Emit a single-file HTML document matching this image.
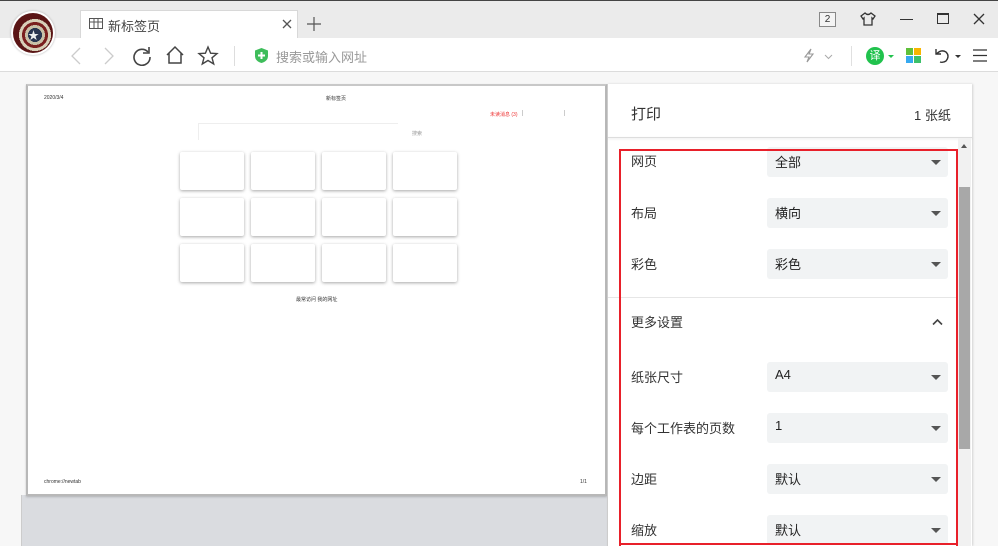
<!DOCTYPE html>
<html><head><meta charset="utf-8"><style>
*{margin:0;padding:0;box-sizing:border-box}
body{width:998px;height:546px;overflow:hidden;background:#f7f7f7;font-family:"Liberation Sans","Noto Sans CJK SC",sans-serif;position:relative;color:#333}
.a{position:absolute}
.tabbar{left:0;top:0;width:998px;height:38px;background:#ebebeb;border-top:1px solid #444}
.tool{left:0;top:38px;width:998px;height:34px;background:#fff;border-bottom:1px solid #dcdcdc}
.card{position:absolute;width:64px;height:38px;background:#fff;border-radius:2px;box-shadow:0 1px 3px rgba(0,0,0,.35)}
.lbl{position:absolute;left:631px;font-size:13px;color:#333}
.dd{position:absolute;left:767px;width:181px;height:30px;background:#f1f3f4;border-radius:3px;font-size:13px;padding:5px 0 0 8px;color:#222}
.dd:after{content:"";position:absolute;right:7px;top:13px;border:5px solid transparent;border-top:5px solid #555;border-bottom:0}
.tiny{font-size:5px;color:#333}
</style></head><body>
<div class="a tabbar"></div>
<div class="a" style="left:80px;top:10px;width:218px;height:29px;background:#fff;border:1px solid #d8d8d8;border-bottom:none"></div>
<svg class="a" style="left:89px;top:18px" width="14" height="11"><rect x=".5" y=".5" width="13" height="10" fill="none" stroke="#555"/><path d="M.5 4H13.5M5 .5V10.5M9 .5V10.5" stroke="#555"/></svg>
<div class="a" style="left:108px;top:16px;font-size:13px;color:#444">新标签页</div>
<svg class="a" style="left:282px;top:19px" width="10" height="10"><path d="M1 1L9 9M9 1L1 9" stroke="#555" stroke-width="1.3"/></svg>
<svg class="a" style="left:307px;top:17px" width="14" height="14"><path d="M7 0V14M0 7H14" stroke="#555" stroke-width="1.2"/></svg>
<div class="a" style="left:819px;top:12px;width:17px;height:15px;border:1px solid #888;background:#f4f4f4;font-size:10px;text-align:center;line-height:13px;color:#333">2</div>
<svg class="a" style="left:860px;top:12px" width="16" height="14"><path d="M5 1L1 4L3 7L4 6V13H12V6L13 7L15 4L11 1Q8 4 5 1Z" fill="none" stroke="#333" stroke-width="1.3"/></svg>
<div class="a" style="left:900px;top:19px;width:13px;height:1px;background:#333"></div>
<div class="a" style="left:937px;top:13px;width:12px;height:11px;border:1.5px solid #333;border-top-width:2px"></div>
<svg class="a" style="left:973px;top:13px" width="12" height="12"><path d="M1 1L11 11M11 1L1 11" stroke="#333" stroke-width="1.3"/></svg>
<div class="a tool"></div>
<div class="a" style="left:11px;top:11px;width:44px;height:44px;border-radius:50%;background:#fff;box-shadow:0 0 2px #aaa"></div>
<div class="a" style="left:13px;top:13px;width:40px;height:40px;border-radius:50%;background:radial-gradient(circle at 55% 55%,#2a3550 0 7px,#c9c0a8 7px 10px,#7a1f1f 10px 13px,#d8cfb8 13px 16px,#5a1515 16px)"></div>
<div class="a" style="left:28px;top:27px;color:#eee;font-size:11px">★</div>
<svg class="a" style="left:70px;top:47px" width="12" height="18"><path d="M10 1L2 9L10 17" fill="none" stroke="#ccc" stroke-width="1.3"/></svg>
<svg class="a" style="left:103px;top:47px" width="12" height="18"><path d="M2 1L10 9L2 17" fill="none" stroke="#ccc" stroke-width="1.3"/></svg>
<svg class="a" style="left:132px;top:46px" width="20" height="20"><path d="M16 6A8 8 0 1 0 18 11" fill="none" stroke="#444" stroke-width="1.6"/><path d="M17 1V7H11" fill="none" stroke="#444" stroke-width="1.6"/></svg>
<svg class="a" style="left:165px;top:45px" width="20" height="20"><path d="M2 10L10 2L18 10M4 8V18H16V8" fill="none" stroke="#444" stroke-width="1.5"/></svg>
<svg class="a" style="left:197px;top:45px" width="22" height="21"><path d="M11 2L13.6 8.2L20 8.6L15 12.8L16.7 19L11 15.5L5.3 19L7 12.8L2 8.6L8.4 8.2Z" fill="none" stroke="#444" stroke-width="1.4"/></svg>
<div class="a" style="left:234px;top:46px;width:1px;height:20px;background:#ddd"></div>
<svg class="a" style="left:254px;top:47px" width="15" height="17"><path d="M7.5 1L14 3.5V9Q14 14 7.5 16Q1 14 1 9V3.5Z" fill="#3ebd5b"/><path d="M7.5 5V12M4 8.5H11" stroke="#fff" stroke-width="2"/></svg>
<div class="a" style="left:276px;top:47px;font-size:13px;color:#999">搜索或输入网址</div>
<svg class="a" style="left:803px;top:48px" width="12" height="15"><path d="M8 1L2 9H6L4 14L10 6H6Z" fill="none" stroke="#999" stroke-width="1.1"/></svg>
<svg class="a" style="left:824px;top:54px" width="9" height="6"><path d="M1 1L4.5 4.5L8 1" fill="none" stroke="#aaa"/></svg>
<div class="a" style="left:851px;top:46px;width:1px;height:20px;background:#e0e0e0"></div>
<div class="a" style="left:866px;top:47px;width:18px;height:18px;border-radius:50%;background:#21c24d;color:#fff;font-size:11px;text-align:center;line-height:18px">译</div>
<div class="a" style="left:888px;top:55px;border:3px solid transparent;border-top:3px solid #21c24d"></div>
<div class="a" style="left:906px;top:48px;width:7px;height:7px;background:#5fc03a"></div><div class="a" style="left:914px;top:48px;width:7px;height:7px;background:#f7b500"></div>
<div class="a" style="left:906px;top:56px;width:7px;height:7px;background:#36a9f0"></div><div class="a" style="left:914px;top:56px;width:7px;height:7px;background:#3cc06a"></div>
<svg class="a" style="left:934px;top:47px" width="18" height="18"><path d="M2 2V7H7M2.5 7Q7 2 12 5Q16 9 12 14Q9 16 6 15" fill="none" stroke="#333" stroke-width="1.4"/></svg>
<div class="a" style="left:955px;top:55px;border:3px solid transparent;border-top:3px solid #333"></div>
<svg class="a" style="left:973px;top:49px" width="14" height="13"><path d="M0 1H14M0 6.5H14M0 12H14" stroke="#333" stroke-width="1.2"/></svg>

<div class="a" style="left:21px;top:495px;width:592px;height:51px;background:#dadce0;border-left:1px solid #ccc"></div>
<div class="a" style="left:26px;top:84px;width:581px;height:412px;background:#fff;border:2px solid #b8b8b8;border-top-color:#c8c8c8;box-shadow:0 1px 2px rgba(0,0,0,.2)"></div>
<div class="a tiny" style="left:44px;top:95px">2020/3/4</div>
<div class="a tiny" style="left:326px;top:95px">新标签页</div>
<div class="a tiny" style="left:490px;top:111px;color:#e33">未读消息 (3)</div>
<div class="a" style="left:522px;top:110px;width:1px;height:6px;background:#ccc"></div>
<div class="a" style="left:564px;top:110px;width:1px;height:6px;background:#ccc"></div>
<div class="a" style="left:198px;top:123px;width:200px;height:17px;border-top:1px solid #eee;border-left:1px solid #eee"></div>
<div class="a tiny" style="left:412px;top:130px;color:#999">搜索</div>
<div class="card" style="left:180px;top:152px"></div><div class="card" style="left:251px;top:152px"></div><div class="card" style="left:322px;top:152px"></div><div class="card" style="left:393px;top:152px"></div>
<div class="card" style="left:180px;top:198px"></div><div class="card" style="left:251px;top:198px"></div><div class="card" style="left:322px;top:198px"></div><div class="card" style="left:393px;top:198px"></div>
<div class="card" style="left:180px;top:244px"></div><div class="card" style="left:251px;top:244px"></div><div class="card" style="left:322px;top:244px"></div><div class="card" style="left:393px;top:244px"></div>
<div class="a tiny" style="left:296px;top:296px">最常访问 我的网址</div>
<div class="a tiny" style="left:44px;top:479px">chrome://newtab</div>
<div class="a tiny" style="left:580px;top:479px">1/1</div>

<div class="a" style="left:607px;top:84px;width:365px;height:462px;background:#fff;border-left:1px solid #ccc;box-shadow:1px 0 2px rgba(0,0,0,.15)"></div>
<div class="a" style="left:631px;top:103px;font-size:15px;color:#333">打印</div>
<div class="a" style="left:914px;top:105px;font-size:13px;color:#333">1 张纸</div>
<div class="a" style="left:608px;top:137px;width:364px;height:1px;background:#ddd;box-shadow:0 1px 2px rgba(0,0,0,.12)"></div>
<div class="a" style="left:958px;top:138px;width:13px;height:408px;background:#f1f1f1"></div>
<div class="a" style="left:961px;top:144px;border:3px solid transparent;border-bottom:4px solid #555;border-top:0"></div>
<div class="a" style="left:959px;top:187px;width:11px;height:262px;background:#a8a8a8"></div>
<div class="lbl" style="top:151px">网页</div><div class="dd" style="top:147px">全部</div>
<div class="lbl" style="top:203px">布局</div><div class="dd" style="top:198px">横向</div>
<div class="lbl" style="top:254px">彩色</div><div class="dd" style="top:249px">彩色</div>
<div class="a" style="left:608px;top:297px;width:350px;height:1px;background:#e6e6e6"></div>
<div class="lbl" style="top:312px">更多设置</div>
<svg class="a" style="left:932px;top:318px" width="11" height="8"><path d="M1 6.5L5.5 2L10 6.5" fill="none" stroke="#444" stroke-width="1.6"/></svg>
<div class="lbl" style="top:367px">纸张尺寸</div><div class="dd" style="top:362px">A4</div>
<div class="lbl" style="top:418px">每个工作表的页数</div><div class="dd" style="top:413px">1</div>
<div class="lbl" style="top:469px">边距</div><div class="dd" style="top:464px">默认</div>
<div class="lbl" style="top:520px">缩放</div><div class="dd" style="top:515px">默认</div>
<div class="a" style="left:619px;top:149px;width:339px;height:397px;border:2px solid #e8202a;border-bottom:none"></div>
<div class="a" style="left:619px;top:543px;width:339px;height:2px;background:#e8202a"></div>
</body></html>
